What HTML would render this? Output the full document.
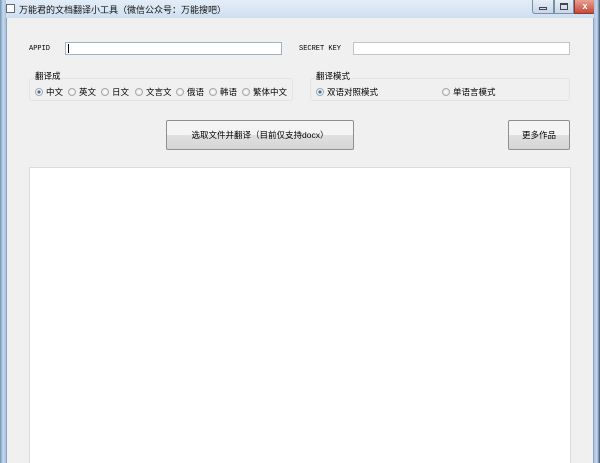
<!DOCTYPE html>
<html><head><meta charset="utf-8"><style>
*{margin:0;padding:0;box-sizing:border-box}
body{width:600px;height:463px;overflow:hidden;background:#c9dcef;font-family:"Liberation Sans","Noto Sans CJK SC",sans-serif;font-size:9px;color:#000;position:relative}
.a{position:absolute}
.title{left:0;top:0;width:600px;height:18px;background:linear-gradient(#e3edf8,#cfdff0)}
.client{left:6px;top:18px;width:588px;height:445px;background:#f0f0f0;border-left:1px solid #8aa4c0;border-right:1px solid #8aa4c0}
.lb{position:absolute;left:0;top:0;width:6px;height:463px;background:linear-gradient(90deg,#6f93b6,#c5d9ee 50%,#a9c2dc)}
.rb{position:absolute;right:0;top:0;width:6px;height:463px;background:linear-gradient(90deg,#a9c2dc,#c5d9ee 50%,#3a5673)}
input{position:absolute;height:13px;border:1px solid #bfc5cc;background:#fff}
.grp{position:absolute;border:1px solid #e4e4e4;border-radius:3px}
.r{position:absolute;top:86px;font-size:8.5px;white-space:nowrap}
.r i{display:inline-block;width:8px;height:8px;border-radius:50%;border:1px solid #a8a8a8;background:radial-gradient(#fff,#ddd);vertical-align:-1px;margin-right:3px}
.r i.on{background:radial-gradient(#2b5d9e 0,#4b7cc0 35%,#fff 45%,#ddd)}
.btn{position:absolute;border:1px solid #8f8f8f;border-radius:2px;background:linear-gradient(#f4f4f4 50%,#e0e0e0 50%,#d6d6d6);text-align:center;font-size:8.5px}
</style></head><body>
<div class="a title"></div>
<div class="a" style="left:6px;top:4px;width:9px;height:9px;border:1px solid #5a6a80;background:#fff"></div>
<div class="a" style="left:19px;top:3px;font-size:9px;color:#111">万能君的文档翻译小工具（微信公众号：万能搜吧）</div>
<div class="a" style="left:532px;top:0;width:22px;height:14px;border:1px solid #7a8fa8;border-top:0;border-radius:0 0 0 3px;background:linear-gradient(#e6eef7,#c8d6e6)"></div>
<div class="a" style="left:539px;top:7px;width:8px;height:3px;border:1px solid #445"></div>
<div class="a" style="left:554px;top:0;width:20px;height:14px;border:1px solid #7a8fa8;border-top:0;background:linear-gradient(#e6eef7,#c8d6e6)"></div>
<div class="a" style="left:560px;top:3px;width:8px;height:7px;border:1px solid #445;border-top-width:2px"></div>
<div class="a" style="left:574px;top:0;width:22px;height:14px;border:1px solid #8a3a30;border-top:0;border-radius:0 0 3px 0;background:linear-gradient(#e8a093,#c74a38);color:#fff;font-weight:bold;font-size:9px;text-align:center;line-height:13px">x</div>
<div class="lb"></div><div class="rb"></div>
<div class="a client"></div>
<div class="a" style="left:29px;top:45px;font-family:'Liberation Mono',monospace;font-size:7px">APPID</div>
<input style="left:65px;top:42px;width:217px;border-color:#9fb2c8">
<div class="a" style="left:68px;top:44px;width:1px;height:9px;background:#000"></div>
<div class="a" style="left:299px;top:45px;font-family:'Liberation Mono',monospace;font-size:7px">SECRET KEY</div>
<input style="left:353px;top:42px;width:217px">
<div class="grp" style="left:29px;top:78px;width:264px;height:23px"></div>
<div class="a" style="left:35px;top:70px;font-size:8.5px">翻译成</div>
<div class="r" style="left:35px"><i class="on"></i>中文</div>
<div class="r" style="left:68px"><i></i>英文</div>
<div class="r" style="left:101px"><i></i>日文</div>
<div class="r" style="left:135px"><i></i>文言文</div>
<div class="r" style="left:176px"><i></i>俄语</div>
<div class="r" style="left:209px"><i></i>韩语</div>
<div class="r" style="left:242px"><i></i>繁体中文</div>
<div class="grp" style="left:310px;top:78px;width:260px;height:23px"></div>
<div class="a" style="left:316px;top:70px;font-size:8.5px">翻译模式</div>
<div class="r" style="left:316px"><i class="on"></i>双语对照模式</div>
<div class="r" style="left:442px"><i></i>单语言模式</div>
<div class="btn" style="left:166px;top:120px;width:188px;height:30px;line-height:28px">选取文件并翻译（目前仅支持docx）</div>
<div class="btn" style="left:508px;top:120px;width:62px;height:30px;line-height:28px">更多作品</div>
<div class="a" style="left:29px;top:167px;width:542px;height:296px;background:#fff;border:1px solid #dcdcdc;border-bottom:0"></div>
</body></html>
